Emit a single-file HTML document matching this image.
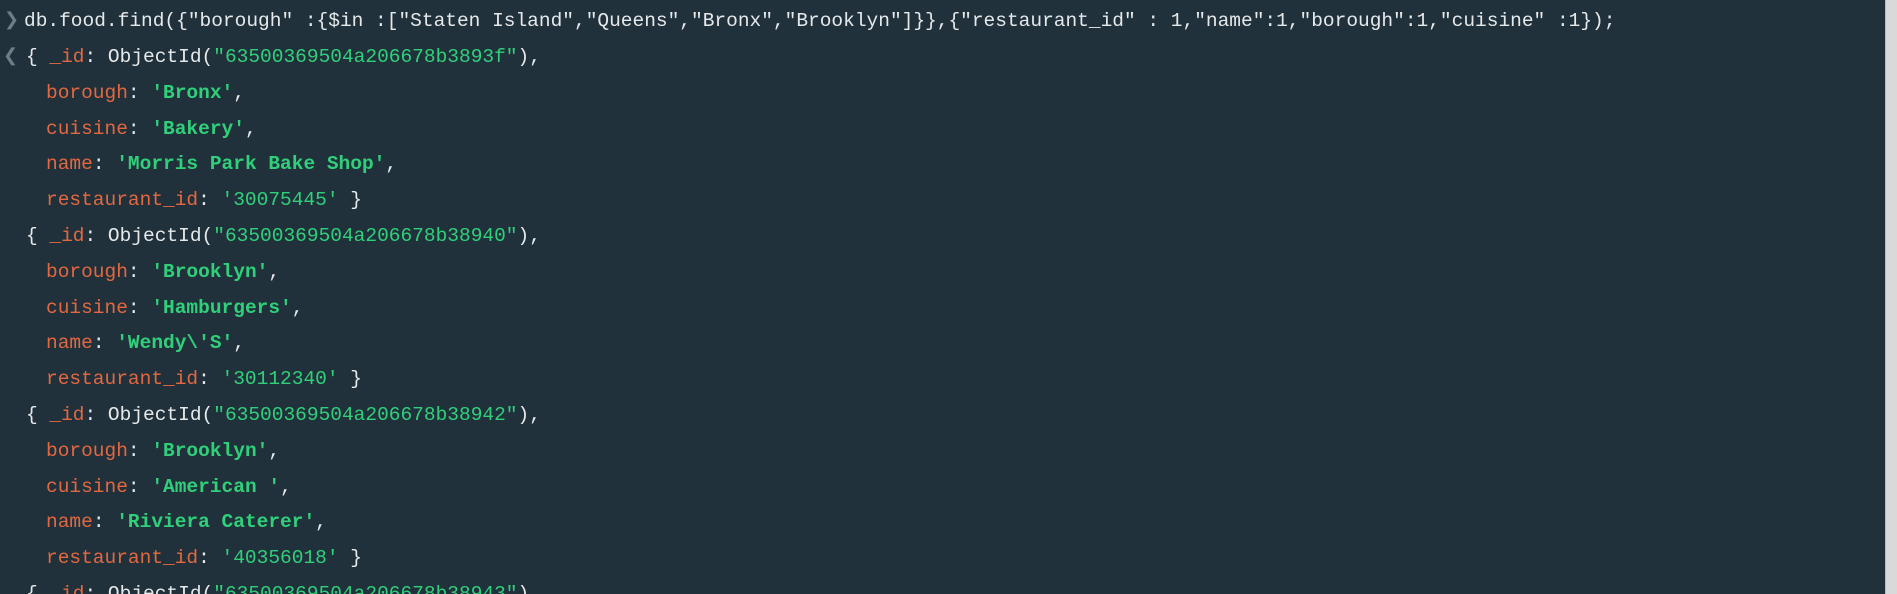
<!DOCTYPE html>
<html><head><meta charset="utf-8"><style>
html,body{margin:0;padding:0;width:1897px;height:594px;overflow:hidden;background:#21313c;}
body{position:relative;font-family:"Liberation Mono","Courier New",monospace;font-size:19.5px;color:#e6e9ea;}
.l{position:absolute;white-space:pre;height:36px;line-height:36px;}
.k{color:#e4683f;}
.s{color:#30d07a;font-weight:bold;}
.h{color:#30d07a;}
.sb{position:absolute;right:0;top:0;width:11px;height:594px;background:#d9d9d9;border-left:1px solid #bbb;}
.ch{position:absolute;left:4px;color:#6d7d87;font-weight:bold;font-size:17px;}
</style></head><body>
<div class="l" style="left:4px;top:3px;color:#6d7d87;font-size:18px">&#x276F;</div>
<div class="l" style="left:24px;top:3px">db.food.find({"borough" :{$in :["Staten Island","Queens","Bronx","Brooklyn"]}},{"restaurant_id" : 1,"name":1,"borough":1,"cuisine" :1});</div>

<div class="l" style="left:3px;top:39px;color:#6d7d87;font-size:18px">&#x276E;</div>
<div class="l" style="left:26px;top:39px">{ <span class="k">_id</span>: ObjectId(<span class="h">"63500369504a206678b3893f"</span>),</div>
<div class="l" style="left:46px;top:74.8px"><span class="k">borough</span>: <span class="s">'Bronx'</span>,</div>
<div class="l" style="left:46px;top:110.6px"><span class="k">cuisine</span>: <span class="s">'Bakery'</span>,</div>
<div class="l" style="left:46px;top:146.4px"><span class="k">name</span>: <span class="s">'Morris Park Bake Shop'</span>,</div>
<div class="l" style="left:46px;top:182.2px"><span class="k">restaurant_id</span>: <span class="h">'30075445'</span> }</div>

<div class="l" style="left:26px;top:218px">{ <span class="k">_id</span>: ObjectId(<span class="h">"63500369504a206678b38940"</span>),</div>
<div class="l" style="left:46px;top:253.8px"><span class="k">borough</span>: <span class="s">'Brooklyn'</span>,</div>
<div class="l" style="left:46px;top:289.6px"><span class="k">cuisine</span>: <span class="s">'Hamburgers'</span>,</div>
<div class="l" style="left:46px;top:325.4px"><span class="k">name</span>: <span class="s">'Wendy\'S'</span>,</div>
<div class="l" style="left:46px;top:361.2px"><span class="k">restaurant_id</span>: <span class="h">'30112340'</span> }</div>

<div class="l" style="left:26px;top:397px">{ <span class="k">_id</span>: ObjectId(<span class="h">"63500369504a206678b38942"</span>),</div>
<div class="l" style="left:46px;top:432.8px"><span class="k">borough</span>: <span class="s">'Brooklyn'</span>,</div>
<div class="l" style="left:46px;top:468.6px"><span class="k">cuisine</span>: <span class="s">'American '</span>,</div>
<div class="l" style="left:46px;top:504.4px"><span class="k">name</span>: <span class="s">'Riviera Caterer'</span>,</div>
<div class="l" style="left:46px;top:540.2px"><span class="k">restaurant_id</span>: <span class="h">'40356018'</span> }</div>

<div class="l" style="left:26px;top:576px">{ <span class="k">_id</span>: ObjectId(<span class="h">"63500369504a206678b38943"</span>),</div>
<div class="sb"></div>
</body></html>
